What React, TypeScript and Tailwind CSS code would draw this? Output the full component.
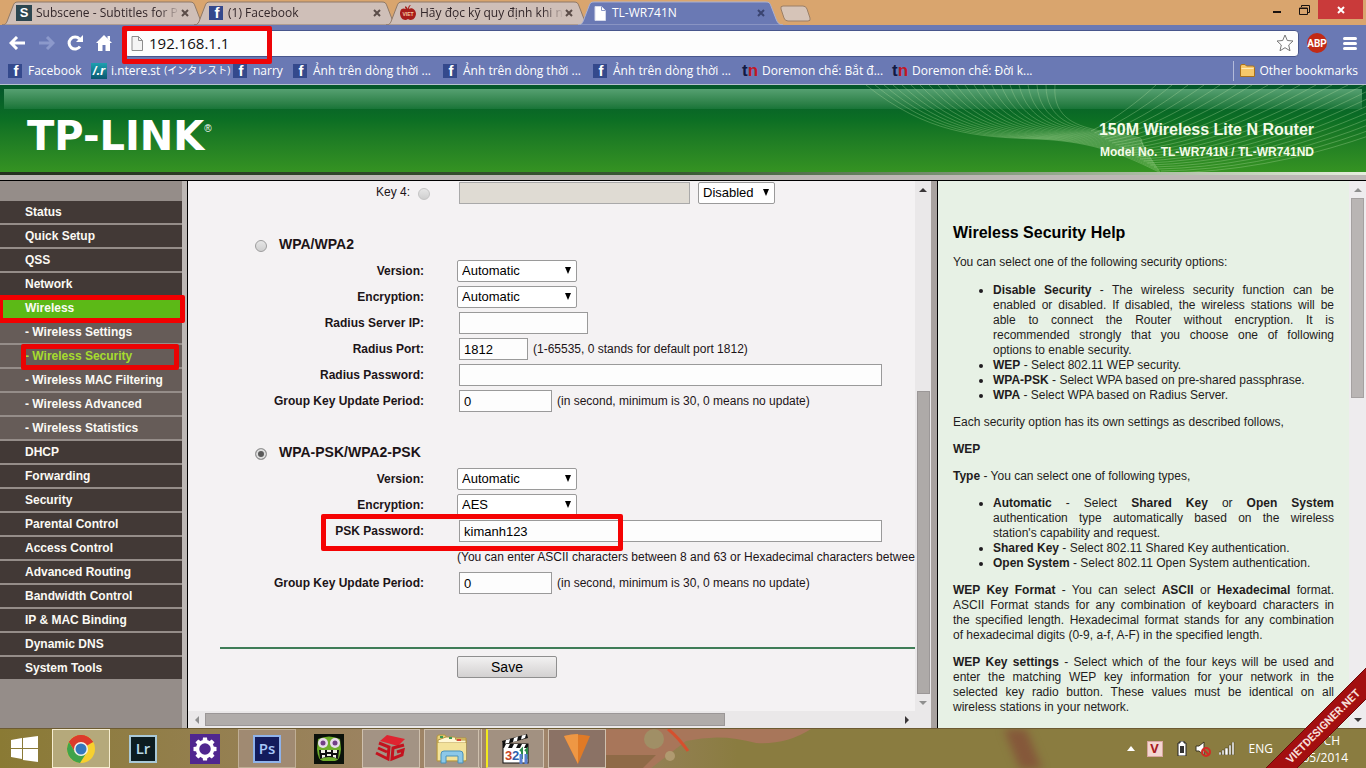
import { useState, type ReactNode } from "react";

const FB = "facebook";
const TN = "tn";

const tabs = [
  { title: "Subscene - Subtitles for P", icon: "subscene" },
  { title: "(1) Facebook", icon: FB },
  { title: "Hãy đọc kỹ quy định khi n", icon: "viet" },
];

const bookmarks = [
  { label: "Facebook", icon: FB, width: "w-[83px]" },
  { label: "i.ntere.st", kana: "(インタレスト)", icon: "intere", width: "w-[142px]" },
  { label: "narry", icon: FB, width: "w-[60px]" },
  { label: "Ảnh trên dòng thời ...", icon: FB, width: "w-[150px]" },
  { label: "Ảnh trên dòng thời ...", icon: FB, width: "w-[150px]" },
  { label: "Ảnh trên dòng thời ...", icon: FB, width: "w-[149px]" },
  { label: "Doremon chế: Bắt đ...", icon: TN, width: "w-[150px]" },
  { label: "Doremon chế: Đời k...", icon: TN, width: "w-[150px]" },
];

const menu = [
  { label: "Status" },
  { label: "Quick Setup" },
  { label: "QSS" },
  { label: "Network" },
  { label: "Wireless", active: true },
  { label: "Wireless Settings", sub: true },
  { label: "Wireless Security", sub: true, current: true },
  { label: "Wireless MAC Filtering", sub: true },
  { label: "Wireless Advanced", sub: true },
  { label: "Wireless Statistics", sub: true },
  { label: "DHCP" },
  { label: "Forwarding" },
  { label: "Security" },
  { label: "Parental Control" },
  { label: "Access Control" },
  { label: "Advanced Routing" },
  { label: "Bandwidth Control" },
  { label: "IP & MAC Binding" },
  { label: "Dynamic DNS" },
  { label: "System Tools" },
];

function Favicon({ name }: { name: string }) {
  if (name === FB)
    return (
      <span className="flex h-[14px] w-[14px] shrink-0 items-end justify-center bg-[#34498c] pl-0.5 font-['Liberation_Sans'] text-[15px] font-bold leading-[14px] text-white">
        f
      </span>
    );
  if (name === "subscene")
    return (
      <span className="flex h-4 w-4 shrink-0 items-center justify-center bg-[#2c4650] font-['Liberation_Sans'] text-[13px] font-bold text-white">S</span>
    );
  if (name === "intere")
    return (
      <span className="flex h-4 w-4 shrink-0 items-center justify-center bg-linear-to-b from-[#1fa0b0] to-[#0a5870] font-['Liberation_Sans'] text-[13px] font-bold italic text-white">
        /.r
      </span>
    );
  if (name === TN)
    return (
      <span className="flex h-4 w-4 shrink-0 items-center justify-center font-['Liberation_Sans'] text-[17px] font-bold leading-4">
        <span className="text-[#101a44]">t</span>
        <span className="text-[#c11622]">n</span>
      </span>
    );
  if (name === "viet")
    return (
      <svg width="16" height="16" viewBox="0 0 16 16" className="shrink-0">
        <path d="M8 4C5-1 4 2 6 4C1 2 0 6 0 9C1 15 5 16 8 14C11 16 15 15 16 9C16 5 12 2 9 4C9 2 10 1 11 0C9 0 8 2 8 4Z" fill="#a81d1a" />
        <text x="8" y="11" fontSize="5" fontWeight="bold" textAnchor="middle" fill="#f3c9a0" fontFamily="Liberation Sans">VIET</text>
      </svg>
    );
  return <PageIcon className="text-white" />;
}

function PageIcon({ className = "", outline = false }: { className?: string; outline?: boolean }) {
  return (
    <svg width="12" height="15" viewBox="0 0 12 15" className={`shrink-0 ${className}`}>
      <path d="M1 .5H7.500L11.500 4.500V14.500H1Z" fill={outline ? "#f4f4f4" : "#fff"} stroke={outline ? "#8d8d8d" : "#d5d9ea"} />
      <path d="M7.500 .5V4.500H11.500" fill="none" stroke={outline ? "#8d8d8d" : "#8b97c6"} />
    </svg>
  );
}

function TabShape({ active = false }: { active?: boolean }) {
  return (
    <svg viewBox="0 0 205 24" preserveAspectRatio="none" className="absolute inset-0 h-full w-full">
      <path
        d="M0 24C4 24 5 21 6 18L11 5C12 2 13 1 16 1H188C191 1 192 2 193 5L198 18C199 21 201 24 205 24Z"
        fill={active ? "#6a79b4" : "#cfbfb8"}
        stroke={active ? "#a9b0d2" : "#8f7968"}
      />
    </svg>
  );
}

function Tab({ title, icon, active = false, first = false }: { title: string; icon: string; active?: boolean; first?: boolean }) {
  return (
    <div className={`relative flex h-6 w-[205px] items-center pl-[14px] ${first ? "" : "-ml-[13px]"}`}>
      <TabShape active={active} />
      <button className="relative flex min-w-0 flex-1 items-center gap-1 text-left">
        <span className="flex w-4 shrink-0 justify-center"><Favicon name={icon} /></span>
        <span
          className={`block w-[144px] whitespace-nowrap text-[12px] leading-5 ${
            active ? "text-white" : "mask-r-from-85% mask-r-to-100% text-[#33272a]"
          }`}
        >
          {title}
        </span>
      </button>
      <button aria-label="Close tab" className="relative mr-[18px] shrink-0">
        <svg width="8" height="8" viewBox="0 0 8 8" stroke={active ? "#3a4470" : "#5b4c48"} strokeWidth="2">
          <path d="M1 1L7 7M7 1L1 7" />
        </svg>
      </button>
    </div>
  );
}

function TabStrip() {
  return (
    <div className="flex h-[25px] items-end justify-between bg-[#d9a56e] pl-0.5">
      <div className="flex min-w-0 items-end">
        {tabs.map((t, i) => <Tab key={t.title} {...t} first={i === 0} />)}
        <Tab title="TL-WR741N" icon="page" active />
        <button aria-label="New tab" className="-ml-1 self-center">
          <svg width="34" height="17" viewBox="0 0 34 17">
            <path d="M4 1H24Q27 1 28 4L31 13Q32 16 29 16H9Q6 16 5 13L2 4Q1 1 4 1Z" fill="#d6c4b8" stroke="#9b7f66" />
          </svg>
        </button>
      </div>
      <div className="flex shrink-0 self-start pr-[3px]">
        <button aria-label="Minimize" className="flex h-[19px] w-[27px] items-center justify-center">
          <svg width="9" height="9" viewBox="0 0 9 9"><path d="M0 6H8V8H0Z" fill="#1a1310" /></svg>
        </button>
        <button aria-label="Restore" className="flex h-[19px] w-[27px] items-center justify-center">
          <svg width="11" height="10" viewBox="0 0 11 10" fill="none" stroke="#1a1310">
            <path d="M2.500 2V.5H10.500V7.500H9" />
            <path d="M.5 3H8.500V9.500H.5ZM.5 3.500H8.500" />
          </svg>
        </button>
        <button aria-label="Close" className="flex h-[19px] w-[45px] items-center justify-center bg-[#c93a3a]">
          <svg width="8" height="8" viewBox="0 0 8 8" stroke="#fff" strokeWidth="2"><path d="M1 1L7 7M7 1L1 7" /></svg>
        </button>
      </div>
    </div>
  );
}

function Toolbar() {
  return (
    <div className="flex h-8 items-center bg-[#6a79b4] pl-[9px] pr-[9px] pt-1">
      <div className="flex w-[115px] shrink-0 items-center gap-3">
        <button aria-label="Back">
          <svg width="17" height="14" viewBox="0 0 17 14" fill="none" stroke="#fff" strokeWidth="3"><path d="M8 1L2 7L8 13M2 7H16" /></svg>
        </button>
        <button aria-label="Forward">
          <svg width="17" height="14" viewBox="0 0 17 14" fill="none" stroke="#8c99cb" strokeWidth="3"><path d="M9 1L15 7L9 13M15 7H1" /></svg>
        </button>
        <button aria-label="Reload">
          <svg width="17" height="16" viewBox="0 0 17 16">
            <path d="M13 11.500A6 6 0 1 1 12.500 4" fill="none" stroke="#fff" strokeWidth="3" />
            <path d="M16 0V7H9Z" fill="#fff" />
          </svg>
        </button>
        <button aria-label="Home">
          <svg width="16" height="16" viewBox="0 0 16 16" fill="#fff">
            <path d="M8 0L16 8H14V16H9.500V10H6.500V16H2V8H0Z" />
            <path d="M11.500 1H14V6L11.500 4Z" />
          </svg>
        </button>
      </div>
      <div className="relative flex h-[27px] min-w-0 flex-1 items-center rounded-sm border border-[#48568c] bg-[#fdfdfd] pl-1.5 pr-1">
        <PageIcon outline />
        <input
          aria-label="Address"
          defaultValue="192.168.1.1"
          className="ml-1.5 min-w-0 flex-1 bg-transparent text-[15px] text-[#111] outline-none"
        />
        <svg width="18" height="18" viewBox="0 0 18 18" fill="#fff" stroke="#777" className="shrink-0">
          <path d="M9 1L11.300 6.500L17 7L12.700 11L14 16.800L9 13.700L4 16.800L5.300 11L1 7L6.700 6.500Z" />
        </svg>
        <span className="pointer-events-none absolute -left-[3px] -top-[5px] z-10 h-[38px] w-[150px] rounded-xs border-5 border-[#ee0508]" />
      </div>
      <span className="ml-2 flex h-5 w-5 items-center justify-center rounded-full bg-[#c22a15] font-['Roboto'] text-[10px] font-bold text-white">
        ABP
      </span>
      <button aria-label="Menu" className="ml-4 flex flex-col gap-0.5">
        <span className="h-[3px] w-[14px] rounded-xs bg-white" />
        <span className="h-[3px] w-[14px] rounded-xs bg-white" />
        <span className="h-[3px] w-[14px] rounded-xs bg-white" />
      </button>
    </div>
  );
}

function BookmarksBar() {
  return (
    <nav className="flex h-7 items-center border-b border-[#b5c3cf] bg-[#6a79b4] pl-2 pr-2 text-[12px] text-white">
      {bookmarks.map((b, i) => (
        <a key={i} href="#" className={`flex shrink-0 items-center whitespace-nowrap ${b.icon === FB ? "gap-1.5" : "gap-1"} ${b.width}`}>
          <Favicon name={b.icon} />
          {b.label}
          {b.kana && <span className="text-[10px]">{b.kana}</span>}
        </a>
      ))}
      <a href="#" className="ml-auto flex h-5 items-center gap-1 whitespace-nowrap border-l border-[#b3bbda] pl-1.5">
        <svg width="15" height="13" viewBox="0 0 15 13">
          <path d="M.5 2Q.5 .5 2 .5H5L6.500 2H13Q14.500 2 14.500 3.500V12.500H.5Z" fill="#f7c86a" stroke="#a9711e" />
          <path d="M1.500 4.500H13.500" stroke="#fdebb8" />
        </svg>
        Other bookmarks
      </a>
    </nav>
  );
}

// two bundles of thin curves meeting behind the router name
function HeaderWaves() {
  const lines = Array.from({ length: 22 }, (_, i) => i);
  return (
    <svg width="500" height="87" viewBox="0 0 500 87" fill="none" className="absolute right-0 top-0">
      {lines.map((i) => (
        <g key={i} stroke="#b9e0a4">
          <path strokeOpacity=".3" d={`M${i * 9} 0C${60 + i * 6} ${48 - i * 0.6} ${110 + i * 5} ${52 - i * 0.5} ${170 + i * 3} ${54 - i * 0.4}S${262 + i} ${72 - i} ${295 - i} ${88 - i * 1.5}`} />
          <path strokeOpacity=".32" d={`M${225 + i * 3.5} ${46 + i * 2}C${250 + i * 9} ${34 + i * 2.5} ${275 + i * 13} ${14 + i} ${290 + i * 16} 0`} />
        </g>
      ))}
    </svg>
  );
}

function RouterHeader() {
  return (
    <header className="shrink-0">
      <div className="relative h-[87px] overflow-hidden bg-linear-to-b from-[#04562a] via-[#0c6f24] via-40% to-[#359322]">
        <div className="mx-1 mt-1 h-5 bg-linear-to-b from-[#55a071] to-[#187538]" />
        <HeaderWaves />
        <div className="relative flex items-start justify-between pl-[27px] pr-[52px]">
          <div className="flex items-start text-white">
            <span className="mt-0.5 font-['DejaVu_Sans'] text-[40px] font-bold leading-[50px]">TP-LINK</span>
            <span className="mt-3 text-[10px] leading-4">®</span>
          </div>
          <div className="pt-[9px] text-right font-bold text-[#f4fbe9]">
            <h1 className="text-[16px] leading-6">150M Wireless Lite N Router</h1>
            <p className="text-[12px] leading-5">Model No. TL-WR741N / TL-WR741ND</p>
          </div>
        </div>
      </div>
      <div className="h-[3px] bg-linear-to-r from-[#25301f] via-[#3a5a34] to-[#e6eedd]" />
      <div className="h-[5px] bg-[#bdb8b5]" />
    </header>
  );
}

function SideMenu() {
  return (
    <aside className="w-[187px] shrink-0 border-r-5 border-[#bdb8b5] bg-[#958d89] pt-5">
      <ul>
        {menu.map((m) => (
          <li key={m.label} className="relative border-b-2 border-[#958d89]">
            <a
              href="#"
              className={`block h-[22px] pl-[25px] text-[12px] font-bold leading-[23px] ${
                m.active ? "bg-[#5cb917]" : m.sub ? "bg-[#665c58]" : "bg-[#423936]"
              } ${m.current ? "text-[#a6dc2e]" : "text-[#fbf9f4]"}`}
            >
              {m.sub && "- "}{m.label}
            </a>
            {m.active && <span className="pointer-events-none absolute -right-[3px] -top-[2px] left-[-2px] z-10 h-7 rounded-xs border-5 border-[#f20000]" />}
            {m.current && <span className="pointer-events-none absolute -top-[1px] left-[21px] right-[3px] z-10 h-[26px] rounded-xs border-5 border-[#ea0303]" />}
          </li>
        ))}
      </ul>
    </aside>
  );
}

function Row({ label, id, children }: { label?: string; id?: string; children: ReactNode }) {
  return (
    <div className="relative flex h-[26px] items-center">
      <div className="mr-[33px] w-[236px] shrink-0 whitespace-nowrap text-right text-[12px] font-bold">
        {label && <label htmlFor={id}>{label}</label>}
      </div>
      <div className="flex items-center whitespace-nowrap text-[12px]">{children}</div>
    </div>
  );
}

function Select({ id, options, width = "w-[120px]", label }: { id: string; options: string[]; width?: string; label?: string }) {
  return (
    <span className={`relative block ${width}`}>
      <select id={id} aria-label={label} className="block h-[22px] w-full appearance-none rounded-xs border border-[#9a9a9a] bg-white pl-1 text-[13px] leading-5 text-black">
        {options.map((o) => <option key={o}>{o}</option>)}
      </select>
      <svg width="8" height="7" viewBox="0 0 8 7" className="pointer-events-none absolute right-[5px] top-[7px]">
        <path d="M1 0H7L4 7Z" fill="#000" />
      </svg>
    </span>
  );
}

function TextInput({ id, value = "", width }: { id: string; value?: string; width: string }) {
  return (
    <input id={id} defaultValue={value} className={`mx-0.5 h-[22px] border border-[#9a9a9a] bg-[#fdfdfd] px-1 text-[13px] text-black ${width}`} />
  );
}

const radioClass =
  "h-3 w-3 shrink-0 appearance-none rounded-full border border-[#9d9d9d] bg-linear-to-b from-[#e6e6e6] to-[#cfcfcf] checked:bg-none checked:bg-[#5a5a5a] checked:shadow-[inset_0_0_0_2px_#dedede] disabled:border-[#c4c4c4]";

function SectionTitle({ id, title, checked, onChange }: { id: string; title: string; checked: boolean; onChange: () => void }) {
  return (
    <div className="flex h-[26px] items-center gap-3 pl-[67px]">
      <input type="radio" id={id} name="security" checked={checked} onChange={onChange} className={`mt-0.5 ${radioClass}`} />
      <label htmlFor={id} className="pb-0.5 text-[14px] font-bold leading-4">{title}</label>
    </div>
  );
}

function SecurityForm() {
  const [mode, setMode] = useState("psk");
  return (
    <form className="text-[#1c1417]" onSubmit={(e) => e.preventDefault()}>
      <div className="flex h-6 items-center">
        <div className="mr-[27px] flex w-[242px] shrink-0 items-center justify-end gap-2 text-[12px]">
          <label htmlFor="key4" className="pb-0.5">Key 4:</label>
          <input type="radio" id="key4" disabled className={`mt-0.5 ${radioClass}`} />
        </div>
        <input aria-label="Key 4 value" disabled className="mx-0.5 h-[22px] w-[231px] border border-[#a9a9a9] bg-[#dfdbd3]" />
        <span className="ml-1.5"><Select id="key4type" label="Key 4 type" options={["Disabled", "64bit", "128bit"]} width="w-[77px]" /></span>
      </div>

      <div className="mt-[27px]">
        <SectionTitle id="wpa" title="WPA/WPA2" checked={mode === "wpa"} onChange={() => setMode("wpa")} />
        <Row label="Version:" id="ver1"><Select id="ver1" options={["Automatic", "WPA", "WPA2"]} /></Row>
        <Row label="Encryption:" id="enc1"><Select id="enc1" options={["Automatic", "TKIP", "AES"]} /></Row>
        <Row label="Radius Server IP:" id="rip"><TextInput id="rip" width="w-[129px]" /></Row>
        <Row label="Radius Port:" id="rport">
          <TextInput id="rport" value="1812" width="w-[69px]" />
          <span className="ml-[3px]">(1-65535, 0 stands for default port 1812)</span>
        </Row>
        <Row label="Radius Password:" id="rpass"><TextInput id="rpass" width="w-[423px]" /></Row>
        <Row label="Group Key Update Period:" id="gk1">
          <TextInput id="gk1" value="0" width="w-[93px]" />
          <span className="ml-[3px]">(in second, minimum is 30, 0 means no update)</span>
        </Row>
      </div>

      <div className="mt-[26px]">
        <SectionTitle id="psk" title="WPA-PSK/WPA2-PSK" checked={mode === "psk"} onChange={() => setMode("psk")} />
        <Row label="Version:" id="ver2"><Select id="ver2" options={["Automatic", "WPA-PSK", "WPA2-PSK"]} /></Row>
        <Row label="Encryption:" id="enc2"><Select id="enc2" options={["AES", "Automatic", "TKIP"]} /></Row>
        <Row label="PSK Password:" id="pskpass">
          <TextInput id="pskpass" value="kimanh123" width="w-[423px]" />
          <span className="pointer-events-none absolute -top-[4px] left-[133px] z-10 h-[37px] w-[302px] rounded-xs border-5 border-[#f50303]" />
        </Row>
        <Row>(You can enter ASCII characters between 8 and 63 or Hexadecimal characters between 8 and 64.)</Row>
        <Row label="Group Key Update Period:" id="gk2">
          <TextInput id="gk2" value="0" width="w-[93px]" />
          <span className="ml-[3px]">(in second, minimum is 30, 0 means no update)</span>
        </Row>
      </div>

      <hr className="ml-8 mt-[51px] border-t-2 border-[#3f7d57]" />
      <button className="ml-[269px] mt-[7px] block h-[22px] w-[100px] rounded-xs border border-[#8f8f8f] bg-linear-to-b from-[#f2f1f1] to-[#d3d1d1] text-[14px] leading-5 text-black">
        Save
      </button>
    </form>
  );
}

function Arrow({ dir, dim = false }: { dir: "up" | "down" | "left" | "right"; dim?: boolean }) {
  const d = { up: "M0 6L4 2L8 6Z", down: "M0 2L4 6L8 2Z", left: "M6 0L2 4L6 8Z", right: "M2 0L6 4L2 8Z" }[dir];
  return (
    <span className="flex h-[17px] w-[17px] shrink-0 items-center justify-center">
      <svg width="8" height="8" viewBox="0 0 8 8"><path d={d} fill={dim ? "#8f8f8f" : "#3a3638"} /></svg>
    </span>
  );
}

function MainFrame() {
  return (
    <main className="flex min-w-0 flex-1 flex-col border-l border-black bg-[#f4f2f3]">
      <div className="flex min-h-0 flex-1">
        <div className="min-w-0 flex-1 overflow-hidden"><SecurityForm /></div>
        <div className="flex w-4 shrink-0 flex-col items-center bg-[#eae8e9]">
          <Arrow dir="up" />
          <div className="flex w-[13px] flex-1 flex-col justify-end">
            <div className="h-[61%] border border-[#9b9797] bg-[#aeaaa8]" />
          </div>
          <Arrow dir="down" dim />
        </div>
      </div>
      <div className="flex h-[17px] shrink-0 items-center bg-[#eae8e9] pr-4">
        <Arrow dir="left" dim />
        <div className="flex-1"><div className="h-[13px] w-[75%] border border-[#9b9797] bg-[#b0acaa]" /></div>
        <Arrow dir="right" />
      </div>
    </main>
  );
}

function HelpFrame() {
  return (
    <section className="flex w-[435px] shrink-0 border-l-6 border-[#a8a29f] bg-[#e7f1e5]">
      <div className="min-w-0 flex-1 overflow-hidden border-l border-black px-[15px] pt-[43px] text-justify text-[12px] leading-[15px] text-[#1f1c20]">
        <h2 className="text-[16px] font-bold leading-[18px] text-black">Wireless Security Help</h2>
        <p className="mb-[13px] mt-[13px]">You can select one of the following security options:</p>
        <ul className="my-3 list-disc pl-10">
          <li><b>Disable Security</b> - The wireless security function can be enabled or disabled. If disabled, the wireless stations will be able to connect the Router without encryption. It is recommended strongly that you choose one of following options&nbsp;to enable security.</li>
          <li><b>WEP</b> - Select 802.11 WEP security.</li>
          <li><b>WPA-PSK</b> - Select WPA based on pre-shared passphrase.</li>
          <li><b>WPA</b> - Select WPA based on Radius Server.</li>
        </ul>
        <p className="my-3">Each security option has its own settings as described follows,</p>
        <p className="my-3"><b>WEP</b></p>
        <p className="my-3"><b>Type</b> - You can select one of following types,</p>
        <ul className="my-3 list-disc pl-10">
          <li><b>Automatic</b> - Select <b>Shared Key</b> or <b>Open System</b> authentication type automatically based on the wireless station's&nbsp;capability and request.</li>
          <li><b>Shared Key</b> - Select 802.11 Shared Key authentication.</li>
          <li><b>Open System</b> - Select 802.11 Open System authentication.</li>
        </ul>
        <p className="my-3"><b>WEP Key Format</b> - You can select <b>ASCII</b> or <b>Hexadecimal</b> format. ASCII Format stands for any combination of keyboard characters in the&nbsp;specified length. Hexadecimal format stands for any combination of&nbsp;hexadecimal digits (0-9, a-f, A-F) in the specified length.</p>
        <p className="my-3"><b>WEP Key settings</b> - Select which of the four keys will be used and enter the matching WEP key information for your network in the selected key radio button. These values must be identical on all wireless stations in your network.</p>
      </div>
      <div className="flex w-[17px] shrink-0 flex-col items-center bg-[#eeecee]">
        <Arrow dir="up" dim />
        <div className="w-[13px] flex-1"><div className="h-[39%] border border-[#a5a1a1] bg-[#b9b5b4]" /></div>
        <Arrow dir="down" />
      </div>
    </section>
  );
}

function ChromeLogo() {
  return (
    <svg width="30" height="30" viewBox="0 0 30 30">
      <circle cx="15" cy="15" r="14" fill="#f7d02f" />
      <path d="M15 15L2.900 8A14 14 0 0 1 27.100 8Z" fill="#dc3b2c" />
      <path d="M15 8H27.100A14 14 0 0 0 2.900 8L9 18Z" fill="#dc3b2c" />
      <path d="M2.900 8A14 14 0 0 0 14 29L21 18L9 18Z" fill="#3fa34b" />
      <circle cx="15" cy="15" r="7" fill="#f5f3ec" />
      <circle cx="15" cy="15" r="5.500" fill="#3578bd" />
    </svg>
  );
}

function GearTile() {
  return (
    <svg width="30" height="30" viewBox="0 0 30 30">
      <rect width="30" height="30" fill="#50278f" />
      <circle cx="15" cy="15" r="7.500" fill="none" stroke="#fff" strokeWidth="3.500" />
      {[0, 45, 90, 135, 180, 225, 270, 315].map((a) => (
        <path key={a} d="M12.500 7L13 3.500H17L17.500 7Z" fill="#fff" transform={`rotate(${a} 15 15)`} />
      ))}
    </svg>
  );
}

function ZombieTile() {
  return (
    <svg width="30" height="30" viewBox="0 0 30 30">
      <rect width="30" height="30" fill="#0c120a" />
      <path d="M4 5Q15 0 26 5L27 15Q26 27 21 27H9Q4 27 3 15Z" fill="#6fae2c" />
      <circle cx="9" cy="9" r="5" fill="#e9dcec" /><circle cx="21" cy="9" r="5" fill="#e9dcec" />
      <circle cx="9" cy="9" r="2.500" fill="#713f86" /><circle cx="21" cy="9" r="2.500" fill="#713f86" />
      <path d="M5 16H25L24 25Q15 21 6 25Z" fill="#111" />
      <path d="M7 16H11V19H7ZM13 16H17V18H13ZM19 16H23V19H19ZM8 24V21H11V23ZM13 22V20H17V22ZM19 23V21H22V24Z" fill="#f2f2e6" />
    </svg>
  );
}

// red cube: a "3" bent over the left face, a "G" on the right one
function ThreeGIcon() {
  return (
    <svg width="32" height="30" viewBox="0 0 32 30">
      <path d="M5 7L12 1L30 5L23 12Z" fill="#df2430" />
      <path d="M4 9L14 13L13 25L1 19M3 14L12 18" fill="none" stroke="#c4121e" strokeWidth="3" />
      <path d="M29 11L18 14L17 25L27 21L28 16L22 18" fill="none" stroke="#c4121e" strokeWidth="3" />
    </svg>
  );
}

function FolderIcon() {
  return (
    <svg width="32" height="30" viewBox="0 0 32 30">
      <path d="M1 3Q1 1 3 1H9L11 4H30V27H1Z" fill="#e9d27c" stroke="#b2943f" />
      <path d="M10 3H19L20 6H30V9H2V6Z" fill="#fff7d4" stroke="#b2943f" />
      <path d="M4 2H7V4H4ZM13 3H16V5H13Z" fill="#3c9a50" /><path d="M21 5H25V7H21Z" fill="#d94a3a" />
      <path d="M2 9H30V26H2Z" fill="#f3e29a" />
      <path d="M5 29V20Q5 17 8 17H24Q27 17 27 20V29H22V22H10V29Z" fill="#8cc8e8" stroke="#4b91b8" />
    </svg>
  );
}

function ClapperIcon() {
  return (
    <svg width="32" height="32" viewBox="0 0 32 32">
      <path d="M2 8L27 1L28 5L3 12Z" fill="#111" />
      <path d="M6 7L10 6L9 10L5 11ZM14 5L18 3.500L17 8L13 9ZM22 2.500L26 1.500L25 5L21 6.500Z" fill="#fff" />
      <rect x="3" y="11" width="25" height="19" fill="#fff" stroke="#111" />
      <path d="M3 11H28V15H3Z" fill="#111" />
      <path d="M6 11H10L8 15H4ZM14 11H18L16 15H12ZM22 11H26L24 15H20Z" fill="#fff" />
      <text x="5" y="27" fontFamily="Liberation Sans" fontWeight="bold" fontSize="13" fill="#c8451f">3</text>
      <text x="12" y="27" fontFamily="Liberation Sans" fontWeight="bold" fontSize="13" fill="#2d5fae">2</text>
      <path d="M20 18L22 16V26M25 18L27 16V26" fill="none" stroke="#2c8a4a" strokeWidth="2" />
      <path d="M21 21V31M26 21V31" stroke="#5a7fd0" strokeWidth="3" />
    </svg>
  );
}

function AdobeTile({ text, className }: { text: string; className: string }) {
  return (
    <span className={`flex h-7 w-7 items-center justify-center border-2 text-[15px] font-semibold ${className}`}>{text}</span>
  );
}

const taskItems = [
  { name: "Google Chrome", icon: <ChromeLogo />, box: "border border-[#f6edd0] bg-[#b5a97b]" },
  { name: "Lightroom", icon: <AdobeTile text="Lr" className="border-[#a9c9d8] bg-[#0c1c20] text-[#b9d9e6]" />, box: "" },
  { name: "Settings", icon: <GearTile />, box: "" },
  { name: "Photoshop", icon: <AdobeTile text="Ps" className="border-[#8fb2ea] bg-[#131b5c] text-[#a8c8fa]" />, box: "border border-[#bfae95] bg-[#a08a72]" },
  { name: "Zombies", icon: <ZombieTile />, box: "" },
  { name: "3G", icon: <ThreeGIcon />, box: "border border-[#cfc0ae] bg-[#a39384]" },
  { name: "File Explorer", icon: <FolderIcon />, box: "border border-r-4 border-double border-[#cfc0ae] bg-[#a39384]" },
  { name: "Media Player Classic", icon: <ClapperIcon />, box: "border border-l-2 border-[#cfc0ae] border-l-[#f3ea1c] bg-[#a29181]" },
  {
    name: "Visual Tool",
    icon: (
      <svg width="28" height="32" viewBox="0 0 28 32">
        <path d="M1 3Q14 0 27 3L15 31Z" fill="#e07a26" /><path d="M1 3Q8 1 15 1L15 31Z" fill="#ee9744" />
      </svg>
    ),
    box: "border border-[#cfc0ae] bg-[#8b7265]",
  },
];

function Taskbar() {
  return (
    <footer className="relative flex h-10 shrink-0 items-center overflow-hidden border-t border-[#6d5b32] bg-linear-to-r from-[#8a7a34] via-[#a38670] via-38% to-[#8a7c40] to-54%">
      {/* blurred wallpaper showing through the glass */}
      <svg width="260" height="40" viewBox="0 0 260 40" className="absolute left-[606px] top-0">
        <path d="M0 0H205Q180 16 150 14Q115 4 80 12L44 40H0Z" fill="#a8765a" />
        <path d="M0 26H50L36 40H0Z" fill="#8f6a47" />
        <circle cx="48" cy="10" r="10" fill="#a08f66" />
        <circle cx="64" cy="27" r="5" fill="#b09a70" />
        <path d="M62 0Q72 8 82 22" fill="none" stroke="#d5502e" strokeWidth="3" />
      </svg>
      <svg width="60" height="40" viewBox="0 0 60 40" className="absolute left-[996px] top-0 blur-xs">
        <path d="M8 0H30L46 40H24Z" fill="#85583a" />
      </svg>
      <button aria-label="Start" className="relative flex w-12 shrink-0 justify-center">
        <svg width="27" height="26" viewBox="0 0 27 26" fill="#fff">
          <path d="M0 4L11 2V12H0ZM12 2L27 0V12H12ZM0 13H11V23L0 21ZM12 13H27V26L12 24Z" />
        </svg>
      </button>
      <div className="relative ml-1 flex h-full gap-1">
        {taskItems.map((t) => (
          <button key={t.name} aria-label={t.name} className={`flex h-full w-[58px] items-center justify-center ${t.box}`}>{t.icon}</button>
        ))}
      </div>
      <div className="relative ml-auto flex items-center pr-[18px] text-[12px] text-white">
        <svg width="8" height="5" viewBox="0 0 8 5"><path d="M0 5L4 0L8 5Z" fill="#fff" /></svg>
        <span className="ml-3 flex h-4 w-4 items-center justify-center border border-[#d9a6a0] bg-[#f4d6d2] text-[13px] font-bold text-[#a61c22]">V</span>
        <svg width="10" height="15" viewBox="0 0 10 15" className="ml-[14px]">
          <path d="M3 0H7V2H9V15H1V2H3Z" fill="#fff" stroke="#222" /><path d="M3 5H7V12H3Z" fill="#333" />
        </svg>
        <svg width="16" height="16" viewBox="0 0 16 16" className="ml-2">
          <path d="M1 5H4L9 1V14L4 10H1Z" fill="#fff" stroke="#3a3420" />
          <circle cx="11" cy="11" r="4" fill="none" stroke="#d22b25" strokeWidth="2" /><path d="M8 8L14 14" stroke="#d22b25" strokeWidth="2" />
        </svg>
        <svg width="16" height="13" viewBox="0 0 16 13" className="ml-2" fill="#fff" stroke="#3a3420" strokeWidth=".5">
          <path d="M0 10H2V13H0ZM3 8H5V13H3ZM6 6H9V13H6ZM10 3H12V13H10ZM13 0H15V13H13Z" />
        </svg>
        <span className="ml-[14px]">ENG</span>
        <div className="ml-[25px] text-right leading-[17px]">
          <div className="pr-2">CH</div>
          <div>/05/2014</div>
        </div>
      </div>
    </footer>
  );
}

function Ribbon() {
  return (
    <svg width="100" height="100" viewBox="0 0 100 100" className="pointer-events-none absolute bottom-0 right-0 z-20">
      <path d="M100 0V31L31 100H0Z" fill="#a30f10" />
      <path d="M100 0L0 100M100 31L31 100" stroke="#6d0a0a" />
      <text x="57" y="62" transform="rotate(-45 57 58)" textAnchor="middle" fontFamily="Roboto, sans-serif" fontWeight="bold" fontSize="11" fill="#f6dcd6">
        VIETDESIGNER.NET
      </text>
    </svg>
  );
}

export default function App() {
  return (
    <div className="relative flex h-screen min-h-[600px] w-full flex-col overflow-hidden bg-white font-['Liberation_Sans',Arial,sans-serif]">
      <div className="shrink-0 font-['Open_Sans','Noto_Sans_CJK_JP',sans-serif]">
        <TabStrip />
        <Toolbar />
        <BookmarksBar />
      </div>
      <RouterHeader />
      <div className="flex min-h-0 flex-1 border-t border-black">
        <SideMenu />
        <MainFrame />
        <HelpFrame />
      </div>
      <div className="shrink-0 font-['Open_Sans',sans-serif]"><Taskbar /></div>
      <Ribbon />
    </div>
  );
}
